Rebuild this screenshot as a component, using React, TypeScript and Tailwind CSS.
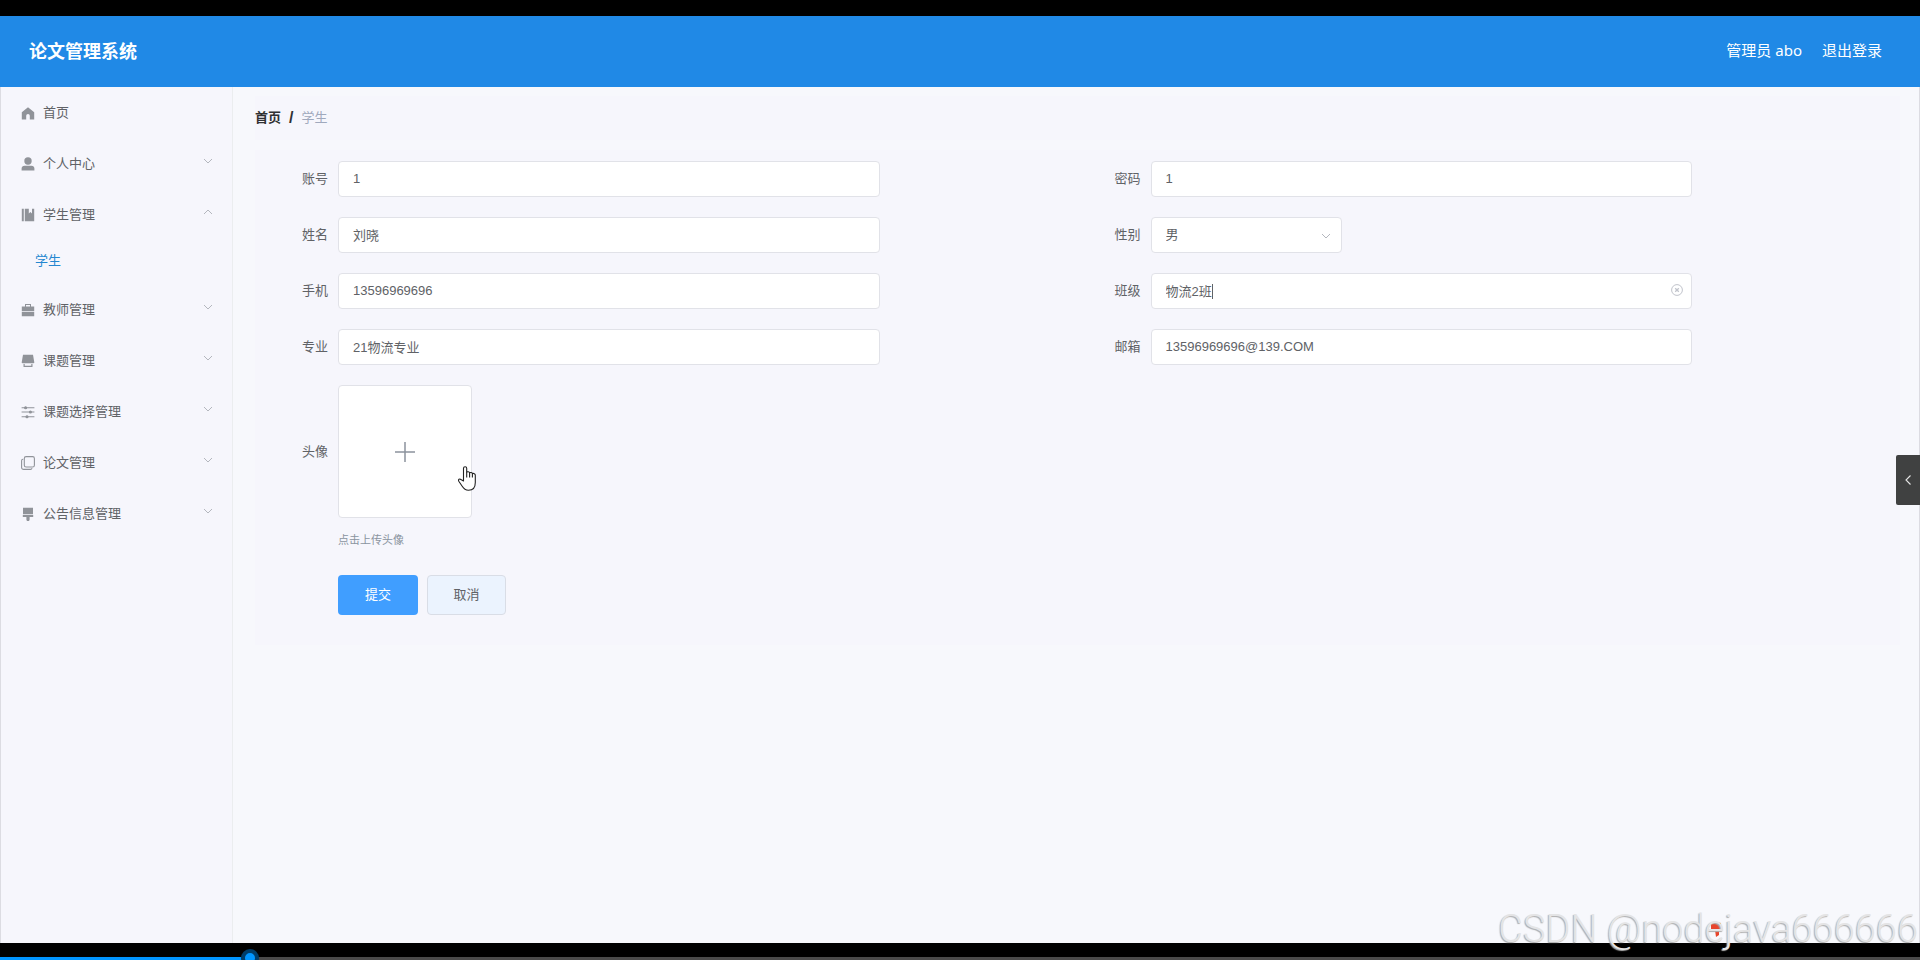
import React, { useState } from "react";

const FONT = "font-['Liberation_Sans','Noto_Sans_CJK_SC',sans-serif]";

function MenuIcon({ children }: { children: React.ReactNode }) {
  return (
    <svg viewBox="0 0 14 14" className="h-[14px] w-[14px] shrink-0" fill="#909399" aria-hidden="true">
      {children}
    </svg>
  );
}

const icons = {
  home: <path d="M7 1.2.8 6.200v7.200h4.400V9.800a1.800 1.800 0 0 1 3.600 0v3.600h4.400V6.200z" />,
  user: (
    <>
      <circle cx="7" cy="4" r="3.7" />
      <path d="M.6 13.6v-2A3 3 0 0 1 3.6 8.800h6.800a3 3 0 0 1 3 2.800v2z" />
    </>
  ),
  book: <path d="M.8.8h2v12.400H.8zM3.800.8h4v4.800l1.600-1.500L11 5.600V.8h2.200v12.400H3.800z" />,
  case: (
    <path d="M4 3.600V1h6v2.600h3.200v4.600H.8V3.600zM5 2v1.600h4V2zM.8 9h12.400v4.300H.8z" fillRule="evenodd" />
  ),
  shop: (
    <>
      <path d="M2 .8h10l1.200 7a1 1 0 0 1-1 1.400H1.800a1 1 0 0 1-1-1.400z" />
      <path d="M2.500 10h1.200v1.700h6.600V10h1.200v2.900h-9z" />
    </>
  ),
  sliders: (
    <g stroke="#909399" strokeWidth="1.100">
      <path d="M.6 2.700h12.800M.6 7h12.800M.6 11.700h12.800" />
      <circle cx="4.600" cy="2.700" r="1" />
      <circle cx="9.400" cy="7" r="1" />
      <circle cx="6" cy="11.700" r="1" />
    </g>
  ),
  copy: (
    <g fill="none" stroke="#909399" strokeWidth="1.100">
      <rect x="3.300" y=".6" width="10.100" height="10.400" rx="1.800" />
      <path d="M2.200 3.300H2A1.500 1.500 0 0 0 .6 4.800v6.600a2 2 0 0 0 2 2h6.800a1.600 1.600 0 0 0 1.600-1.300" />
    </g>
  ),
  brush: <path d="M2 .8h10v6.400H2zM1.800 8h10.400v2H8.600v2.600a1.600 1.600 0 0 1-3.200 0V10H1.800z" />,
};

function Chevron({ up = false, className = "" }: { up?: boolean; className?: string }) {
  return (
    <svg viewBox="0 0 10 6" className={"h-[6px] w-[10px] " + className} fill="none" stroke="#b4b7be" aria-hidden="true">
      <path d={up ? "M1 5 5 1l4 4" : "M1 1l4 4 4-4"} />
    </svg>
  );
}

function MenuItem({ icon, label, open }: { icon: React.ReactNode; label: string; open?: boolean }) {
  return (
    <button type="button" className="flex h-[51px] w-full items-center gap-2 pr-[19px] pl-5 text-left">
      <MenuIcon>{icon}</MenuIcon>
      <span className="flex-1">{label}</span>
      {open !== undefined && <Chevron up={open} className="mb-[6px]" />}
    </button>
  );
}

const controlClass =
  "h-9 w-full rounded border border-[#e1e2e8] bg-white px-[14px] text-[13px] text-[#606266] outline-none";
const inputClass = controlClass + " pb-[2px]";

function Field({ id, label, children }: { id: string; label: string; children: React.ReactNode }) {
  return (
    <div className="flex items-center">
      <label htmlFor={id} className="w-[63px] shrink-0 text-right">
        {label}
      </label>
      <div className="relative ml-[10px] w-2/3">{children}</div>
    </div>
  );
}

function TextField({ id, label, value }: { id: string; label: string; value: string }) {
  const [text, setText] = useState(value);
  return (
    <Field id={id} label={label}>
      <input id={id} type="text" className={inputClass} value={text} onChange={(e) => setText(e.target.value)} />
    </Field>
  );
}

export default function App() {
  const [group, setGroup] = useState("物流2班");
  return (
    <div className={"relative flex min-h-screen flex-col overflow-hidden bg-black pt-4 text-[13px] text-[#606266] " + FONT}>
      <header className="flex h-[71px] items-center justify-between bg-[#2089e6] pr-[38px] pl-[29px] text-white">
        <h1 className="pt-[2px] text-[18px] font-bold">论文管理系统</h1>
        <nav className="flex items-center gap-5 pb-[2px] text-[15px] font-['Noto_Sans','Noto_Sans_CJK_SC',sans-serif]">
          <span>管理员 abo</span>
          <a href="#logout">退出登录</a>
        </nav>
      </header>

      <div className="flex flex-1 border-x border-[#dcdce2] bg-[#f7f8fc]">
        <aside className="w-[232px] shrink-0 border-r border-[#ebedef] bg-[#f6f6fc]">
          <MenuItem icon={icons.home} label="首页" />
          <MenuItem icon={icons.user} label="个人中心" open={false} />
          <MenuItem icon={icons.book} label="学生管理" open />
          <a href="#students" className="flex h-11 items-center pb-[2px] pl-[34px] text-[#2487d0]">
            学生
          </a>
          <MenuItem icon={icons.case} label="教师管理" open={false} />
          <MenuItem icon={icons.shop} label="课题管理" open={false} />
          <MenuItem icon={icons.sliders} label="课题选择管理" open={false} />
          <MenuItem icon={icons.copy} label="论文管理" open={false} />
          <MenuItem icon={icons.brush} label="公告信息管理" open={false} />
        </aside>

        <main className="min-w-0 flex-1 pt-[9px] pr-[19px] pl-[22px]">
          <nav className="flex h-11 items-center gap-2 bg-[#f6f6fc]">
            <a href="#home" className="font-bold text-[#303133]">
              首页
            </a>
            <span className="text-[16px] font-bold text-[#303133]">/</span>
            <span className="text-[#a0a9bd]">学生</span>
          </nav>

          <form className="mt-[10px] bg-[#f6f6fc] px-[10px] pt-[11px] pb-[30px]" onSubmit={(e) => e.preventDefault()}>
            <div className="grid grid-cols-2 gap-y-5">
              <TextField id="account" label="账号" value="1" />
              <TextField id="password" label="密码" value="1" />
              <TextField id="name" label="姓名" value="刘晓" />
              <Field id="gender" label="性别">
                <div className="relative w-[191px]">
                  <select id="gender" className={controlClass + " appearance-none"} defaultValue="男">
                    <option>男</option>
                    <option>女</option>
                  </select>
                  <Chevron className="pointer-events-none absolute top-4 right-[11px]" />
                </div>
              </Field>
              <TextField id="phone" label="手机" value="13596969696" />
              <Field id="group" label="班级">
                <input id="group" type="text" className={inputClass} value={group} onChange={(e) => setGroup(e.target.value)} />
                <span className="pointer-events-none absolute top-[11px] left-[61px] h-[15px] w-px bg-[#606266]" />
                <button type="button" aria-label="清空" onClick={() => setGroup("")} className="absolute top-[11px] right-[9px]">
                  <svg viewBox="0 0 12 12" className="h-3 w-3" fill="none" stroke="#c0c3cb">
                    <circle cx="6" cy="6" r="5.400" />
                    <path d="m4.200 4.200 3.600 3.600m0-3.600L4.200 7.800" strokeWidth="1.300" />
                  </svg>
                </button>
              </Field>
              <TextField id="major" label="专业" value="21物流专业" />
              <TextField id="email" label="邮箱" value="13596969696@139.COM" />
              <div className="flex items-center">
                <label htmlFor="avatar" className="w-[63px] text-right">
                  头像
                </label>
                <button
                  id="avatar"
                  type="button"
                  className="relative ml-[10px] flex h-[133px] w-[134px] cursor-pointer items-center justify-center rounded border border-[#e1e2e8] bg-white"
                >
                  <svg viewBox="0 0 20 20" className="h-5 w-5" stroke="#8c939d" strokeWidth="1.500" aria-hidden="true">
                    <path d="M10 0v20M0 10h20" />
                  </svg>
                  <svg
                    viewBox="0 0 18 25"
                    className="absolute top-[80px] left-[119px] h-[25px] w-[18px]"
                    fill="#fff"
                    stroke="#222"
                    strokeWidth="1.100"
                    strokeLinejoin="round"
                    aria-hidden="true"
                  >
                    <path d="M5.500 15V2.300C5.500.3 8.700.3 8.700 2.300V6c.8-.6 2.600-.3 2.900.7.900-.5 2.500-.2 2.800.8 1.300-.4 2.900.2 2.900 1.700v7.200c0 5-2.700 7.800-6.800 7.800-3.300 0-4.800-1.400-6.300-3.900L.8 15.200c-1-1.600.8-2.900 2.100-1.700z" />
                    <path d="M8.700 6v5.500M11.600 6.700v4.800M14.400 7.500v4" />
                  </svg>
                </button>
              </div>
            </div>

            <p className="mt-[13px] ml-[73px] text-[11px] leading-[18px] text-[#8a94a0]">点击上传头像</p>
            <div className="mt-[26px] ml-[73px] flex gap-[9px]">
              <button type="submit" className="h-10 w-20 rounded bg-[#409eff] text-white">
                提交
              </button>
              <button type="button" className="h-10 w-[79px] rounded border border-[#d9dde6] bg-[#ebf3fe]">
                取消
              </button>
            </div>
          </form>
        </main>
      </div>

      <footer className="flex h-[17px] flex-col justify-end bg-black">
        <div className="relative h-[3px] bg-[#4a4a4a]">
          <div className="h-full w-[13%] bg-[#0095ff]" />
          <span className="absolute -top-2 left-[13%] h-[18px] w-[18px] -translate-x-1/2 rounded-full border-4 border-[#003d69] bg-[#0095ff]" />
        </div>
      </footer>

      <button
        type="button"
        aria-label="展开"
        className="absolute top-[455px] right-0 flex h-[50px] w-6 items-center justify-center rounded-l-xs bg-[#404141]"
      >
        <svg viewBox="0 0 6 10" className="h-[10px] w-[6px]" fill="none" stroke="#e6e6e6" strokeWidth="1.100" aria-hidden="true">
          <path d="M5.500.5 1 5l4.500 4.500" />
        </svg>
      </button>

      <div className="pointer-events-none absolute right-[2px] bottom-[11px]">
        <svg viewBox="0 0 12 16" className="absolute top-[12px] right-[196px] h-4 w-3" aria-hidden="true">
          <path d="M1 3 5 1l6 1v5L9 10v4l-3 2-1-7-4-1z" fill="#e8452c" />
        </svg>
        <span className="relative font-['Roboto','Liberation_Sans',sans-serif] text-[38px] leading-10 font-light text-[#e4e4e5] [text-shadow:-1px_1px_1px_#adadad]">
          CSDN @nodejava666666
        </span>
      </div>
    </div>
  );
}
